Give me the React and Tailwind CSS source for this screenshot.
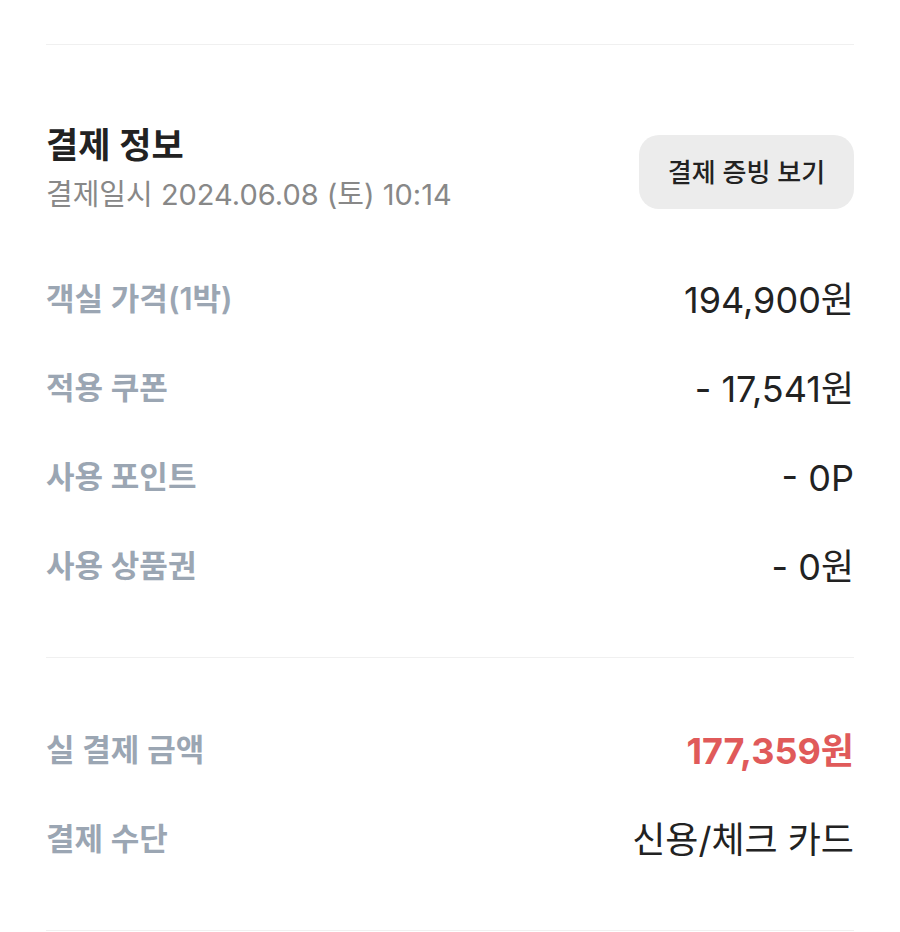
const font = { fontFamily: '"Inter", "Noto Sans CJK KR", sans-serif' };

const rows = [
  { label: '객실 가격(1박)', value: '194,900원' },
  { label: '적용 쿠폰', value: '- 17,541원' },
  { label: '사용 포인트', value: '- 0P' },
  { label: '사용 상품권', value: '- 0원' },
];

function Row({ label, value, valueClass = 'text-[36px] font-normal text-[#222222]' }) {
  return (
    <div className="flex h-[89px] items-center justify-between">
      <span className="text-[31px] font-semibold text-[#9ba6b3]">{label}</span>
      <span className={valueClass}>{value}</span>
    </div>
  );
}

export default function App() {
  return (
    <div className="min-h-[932px] bg-white px-[46px]" style={font}>
      <div className="h-[45px] border-b border-[#f0f0f0]" />

      <div className="flex items-start justify-between pt-[78px]">
        <div className="flex flex-col">
          <h2 className="text-[35px] font-semibold leading-[44px] text-[#222222]">결제 정보</h2>
          <p className="mt-[8px] text-[29px] leading-[40px] text-[#888888]">결제일시 2024.06.08 (토) 10:14</p>
        </div>
        <button className="mt-[12px] flex h-[74px] w-[215px] items-center justify-center rounded-[20px] bg-[#ececec] text-[26px] font-medium text-[#222222]">
          결제 증빙 보기
        </button>
      </div>

      <div className="border-b border-[#f0f0f0] pt-[40px] pb-[46px]">
        {rows.map(r => (
          <Row key={r.label} label={r.label} value={r.value} />
        ))}
      </div>

      <div className="border-b border-[#f0f0f0] pt-[48px] pb-[46px]">
        <Row label="실 결제 금액" value="177,359원" valueClass="text-[36px] font-bold text-[#e05a5a]" />
        <Row label="결제 수단" value="신용/체크 카드" />
      </div>
    </div>
  );
}
